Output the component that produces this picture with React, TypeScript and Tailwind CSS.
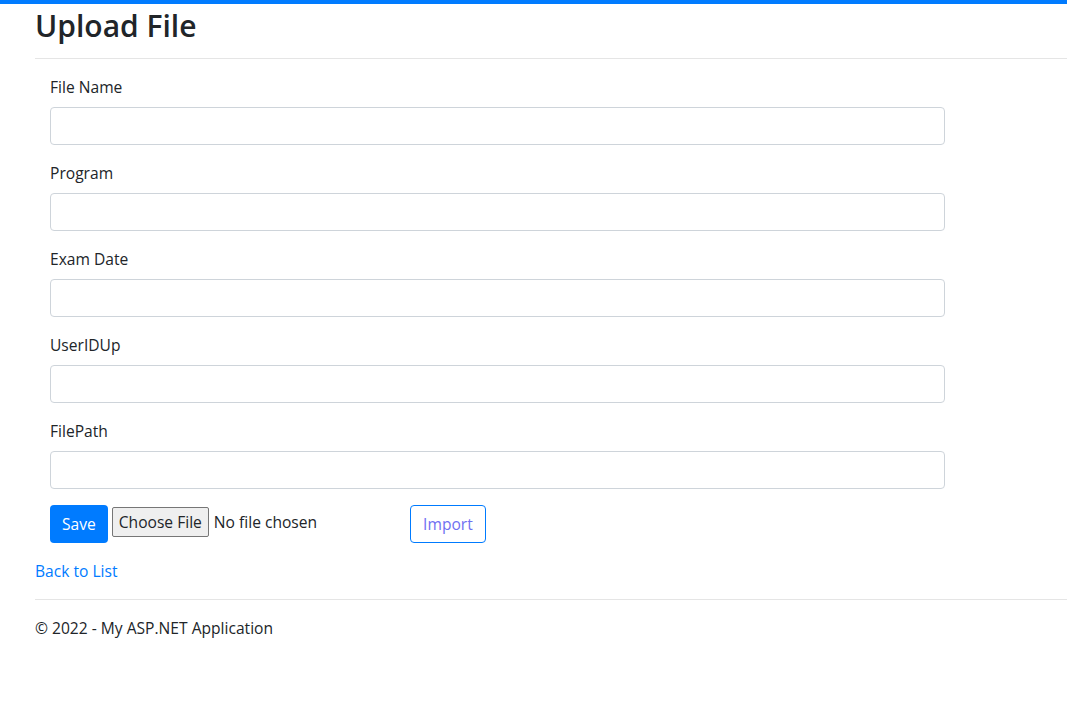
import React from "react";

const fields = ["File Name", "Program", "Exam Date", "UserIDUp", "FilePath"];

export default function App() {
	return (
		<div className="min-h-[710px] bg-white text-[#212529] text-[15.6px] leading-6 [font-family:'Open_Sans','Noto_Sans',sans-serif]">
			<div className="h-[4px] bg-[#007bff]" />
			<div className="pl-[35px]">
				<h2 className="text-[30px] leading-[38px] font-semibold pt-[3px] mb-[13px]">
					Upload File
				</h2>
				<hr className="border-t border-[#e5e5e5]" />

				<form className="px-[15px] pt-[16px] w-[925px]">
					{fields.map((f) => (
						<div key={f} className="mb-[16px]">
							<label className="block mb-[8px]">{f}</label>
							<input
								type="text"
								className="block w-full h-[38px] border border-[#ced4da] rounded-[4px] px-3 outline-none"
							/>
						</div>
					))}

					<div className="flex items-center">
						<button
							type="button"
							className="h-[38px] px-[12px] bg-[#007bff] text-white rounded-[4px]"
						>
							Save
						</button>
						<div className="flex items-center ml-[4px] -mt-[4px]">
							<span className="h-[30px] px-[6px] flex items-center bg-[#efefef] border border-[#767676] rounded-[2px]">
								Choose File
							</span>
							<span className="ml-[5px]">No file chosen</span>
						</div>
						<button
							type="button"
							className="ml-[93px] h-[38px] px-[12px] border border-[#007bff] rounded-[4px] text-[#6f70f2]"
						>
							Import
						</button>
					</div>
				</form>

				<div className="mt-[16px]">
					<a href="#" className="text-[#007bff]">
						Back to List
					</a>
				</div>
				<hr className="mt-[16px] border-t border-[#e5e5e5]" />
				<footer className="pt-[16px]">
					<p>© 2022 - My ASP.NET Application</p>
				</footer>
			</div>
		</div>
	);
}
